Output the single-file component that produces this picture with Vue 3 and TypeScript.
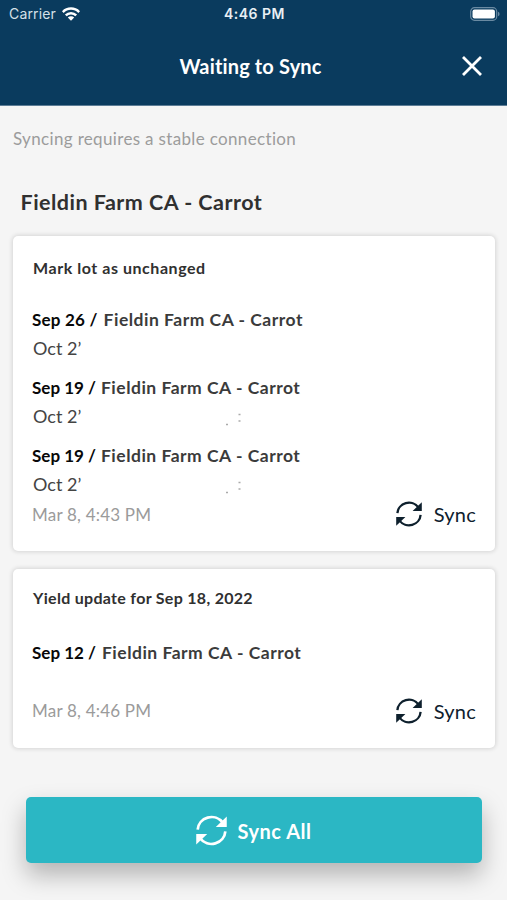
<script setup lang="ts">
import { defineComponent, h } from 'vue'

interface Entry {
  date: string
  farm: string
  detail?: string
  marks?: boolean
}

interface SyncCard {
  kind: string
  title: string
  entries: Entry[]
  time: string
}

const farm = 'Fieldin Farm CA - Carrot'

const cards: SyncCard[] = [
  {
    kind: 'lots',
    title: 'Mark lot as unchanged',
    entries: [
      { date: 'Sep 26 /', farm, detail: 'Oct 2’' },
      { date: 'Sep 19 /', farm, detail: 'Oct 2’', marks: true },
      { date: 'Sep 19 /', farm, detail: 'Oct 2’', marks: true },
    ],
    time: 'Mar 8, 4:43 PM',
  },
  {
    kind: 'yield',
    title: 'Yield update for Sep 18, 2022',
    entries: [{ date: 'Sep 12 /', farm }],
    time: 'Mar 8, 4:46 PM',
  },
]

const SyncIcon = defineComponent(() => () =>
  h('svg', { viewBox: '0 0 26 26', fill: 'none', 'aria-hidden': 'true' }, [
    h('path', {
      d: 'M1.4 12.2A11.6 11.2 0 0 1 22.4 6.4M24.6 13.8A11.6 11.2 0 0 1 3.6 19.6',
      stroke: 'currentColor',
      'stroke-width': 2.3,
    }),
    h('path', {
      d: 'M25.8 1.2V10H16.6ZM.2 24.8V16H9.4Z',
      fill: 'currentColor',
    }),
  ]),
)
</script>

<template>
  <main class="screen">
    <header class="header">
      <div class="status">
        <div class="carrier">
          <span class="carrier-name">Carrier</span>
          <svg class="wifi" viewBox="0 0 18 14" aria-hidden="true">
            <g fill="none" stroke="currentColor" stroke-width="2.5">
              <path d="M.8 5.1A11.4 11.4 0 0 1 17.2 5.1" />
              <path d="M3.8 8.4A7.3 7.3 0 0 1 14.2 8.4" />
            </g>
            <path d="M9 13.8 5.8 10.5A4.6 4.6 0 0 1 12.2 10.5Z" fill="currentColor" />
          </svg>
        </div>
        <span class="clock">4:46 PM</span>
        <svg class="battery" viewBox="0 0 30 14" aria-hidden="true">
          <rect x=".7" y=".7" width="26" height="12.6" rx="3.8" fill="none" stroke="#6a8aa2" stroke-width="1.2" />
          <rect x="2.5" y="2.5" width="22.4" height="9" rx="2" fill="#fff" />
          <path d="M28 4.8Q29.6 5.3 29.6 7T28 9.2Z" fill="#6a8aa2" />
        </svg>
      </div>
      <div class="nav">
        <h1 class="title">Waiting to Sync</h1>
        <button class="close" aria-label="Close">
          <svg viewBox="0 0 20 20" aria-hidden="true">
            <path d="M1 1 19 19M19 1 1 19" stroke="currentColor" stroke-width="2.8" />
          </svg>
        </button>
      </div>
    </header>

    <p class="notice">Syncing requires a stable connection</p>
    <h2 class="group">{{ farm }}</h2>

    <section v-for="card in cards" :key="card.kind" class="card" :class="card.kind">
      <h3 class="card-title">{{ card.title }}</h3>
      <div class="entries">
        <div v-for="(entry, i) in card.entries" :key="i" class="entry">
          <div class="entry-head">
            <span class="date">{{ entry.date }}</span>
            <span class="farm">{{ entry.farm }}</span>
          </div>
          <div v-if="entry.detail" class="detail">
            <span class="detail-text">{{ entry.detail }}</span>
            <svg v-if="entry.marks" class="marks" viewBox="0 0 18 14" aria-hidden="true">
              <path d="M1 11.5H3M13.5 1.5H15.5M13.5 8H15.5" stroke="#aaa" stroke-width="1.5" />
            </svg>
          </div>
        </div>
      </div>
      <footer class="card-foot">
        <span class="time">{{ card.time }}</span>
        <button class="sync"><SyncIcon class="sync-icon" /><span class="sync-label">Sync</span></button>
      </footer>
    </section>

    <button class="sync-all"><SyncIcon class="all-icon" /><span class="all-label">Sync All</span></button>
  </main>
</template>

<style>
body {
  background: #f5f5f5;
}
</style>

<style scoped>
.screen {
  box-sizing: border-box;
  height: 900px;
  overflow: hidden;
  background: #f5f5f5;
  color: #303030;
  font-family: Lato, "Open Sans", sans-serif;
  white-space: nowrap;
}
h1, h2, h3, p { margin: 0; }
button {
  border: 0;
  padding: 0;
  background: none;
  font: inherit;
  color: inherit;
}
svg { display: block; flex: none; }

.header {
  height: 106px;
  box-sizing: border-box;
  border-bottom: 1px solid #5d7d96;
  background: #0a3b5e;
  color: #fff;
}
.status {
  display: grid;
  grid-template-columns: 1fr auto 1fr;
  align-items: center;
  height: 27px;
  padding: 0 7px 0 9px;
  font-family: Inter, sans-serif;
}
.carrier { display: flex; align-items: center; gap: 6px; }
.carrier-name { font-size: 14px; letter-spacing: 0.15px; color: #d5e0e8; }
.wifi { width: 18px; height: 14px; }
.clock { font-size: 14px; font-weight: 600; letter-spacing: 0.5px; color: #e8eff4; }
.battery { width: 30px; height: 14px; justify-self: end; }
.nav {
  display: grid;
  grid-template-columns: 1fr auto 1fr;
  align-items: center;
  height: 78px;
  padding: 0 25px 0 19px;
}
.title { grid-column: 2; font-size: 20px; line-height: 24px; font-weight: 700; letter-spacing: 0.15px; }
.close { justify-self: end; }
.close svg { width: 20px; height: 20px; }

.notice {
  margin: 23px 0 0 13px;
  font-size: 17px;
  line-height: 20px;
  letter-spacing: 0.34px;
  color: #9c9c9c;
}
.group {
  margin: 40px 0 0 20.5px;
  font-size: 21.5px;
  line-height: 26px;
  font-weight: 700;
  letter-spacing: 0.48px;
}
.card {
  box-sizing: border-box;
  width: 482px;
  margin: 0 0 18px 13px;
  padding: 22px 19px 0;
  border-radius: 5px;
  background: #fff;
  box-shadow: 0 0 4px 1px rgba(0, 0, 0, 0.13);
}
.lots { height: 315px; margin-top: 21px; }
.yield { height: 179px; margin-bottom: 49px; padding-top: 19px; }
.card-title {
  margin-left: 1px;
  font-size: 16px;
  line-height: 20px;
  font-weight: 700;
  letter-spacing: 0.55px;
}
.yield .card-title { letter-spacing: 0.3px; }
.entries { display: grid; gap: 20px; margin-top: 32px; }
.yield .entries { margin-top: 35px; }
.entry-head { display: flex; gap: 5px; line-height: 20px; font-size: 17px; font-weight: 700; }
.lots .entry:first-child .date { letter-spacing: 0.2px; }
.lots .entry:first-child .entry-head,
.yield .entry-head { gap: 6px; }
.date { color: #080808; }
.farm { color: #3b3b3b; font-size: 17.5px; letter-spacing: 0.5px; }
.detail { display: flex; align-items: center; margin: 8px 0 0 1px; height: 20px; line-height: 20px; font-size: 18px; color: #444; }
.detail-text { width: 192px; }
.marks { width: 18px; height: 14px; margin-top: 8px; }
.card-foot { display: flex; justify-content: space-between; align-items: center; height: 28px; margin-top: 7px; }
.yield .card-foot { margin-top: 34px; }
.time { font-size: 17px; line-height: 20px; letter-spacing: 0.2px; color: #9b9b9b; }
.sync { display: flex; align-items: center; gap: 12px; color: #0e202d; }
.lots .sync { margin-bottom: 2px; }
.sync-icon { width: 26px; height: 26px; }
.sync-label { font-size: 20px; line-height: 24px; letter-spacing: 0.25px; }
.sync-all {
  display: flex;
  align-items: center;
  justify-content: center;
  gap: 11px;
  width: 456px;
  height: 66px;
  margin-left: 26px;
  padding: 1px 1px 0 0;
  box-sizing: border-box;
  border-radius: 5px;
  background: #2bb7c4;
  color: #fff;
  box-shadow: 0 12px 24px rgba(0, 0, 0, 0.27);
}
.all-icon { width: 31px; height: 31px; }
.all-label { font-size: 20px; line-height: 24px; font-weight: 700; letter-spacing: 0.5px; }
</style>
